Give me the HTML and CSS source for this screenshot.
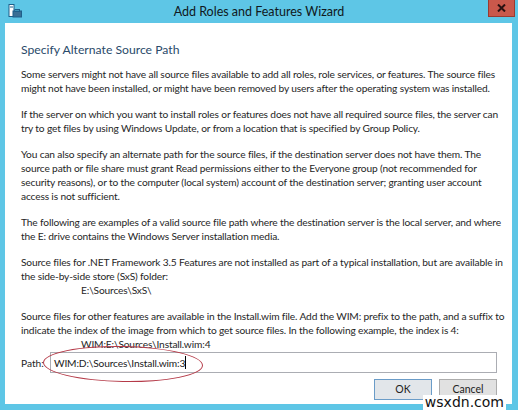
FILE: index.html
```html
<!DOCTYPE html>
<html>
<head>
<meta charset="utf-8">
<link rel="stylesheet" href="styles.css">
</head>
<body>
<div class="window">
  <div class="titlebar">
    <svg class="appicon" width="14" height="14" viewBox="0 0 14 14">
      <rect x="1" y="0.5" width="5" height="12" fill="#fff" stroke="#1d5f8a" stroke-width="1"/>
      <line x1="2" y1="3" x2="5" y2="3" stroke="#1d5f8a"/>
      <rect x="5" y="7" width="8.5" height="6" fill="#3a6f95" stroke="#1d5f8a" stroke-width="1"/>
      <rect x="7" y="5.5" width="4.5" height="2" fill="none" stroke="#1d5f8a" stroke-width="1"/>
    </svg>
    <div class="title">Add Roles and Features Wizard</div>
    <div class="close">
      <svg width="9" height="8" viewBox="0 0 9 8"><path d="M1 0.5 L8 7.5 M8 0.5 L1 7.5" stroke="#2a1010" stroke-width="2"/></svg>
    </div>
  </div>
  <div class="content">
    <h1 class="heading">Specify Alternate Source Path</h1>
    <p>Some servers might not have all source files available to add all roles, role services, or features. The source files<br>might not have been installed, or might have been removed by users after the operating system was installed.</p>
    <p>If the server on which you want to install roles or features does not have all required source files, the server can<br>try to get files by using Windows Update, or from a location that is specified by Group Policy.</p>
    <p>You can also specify an alternate path for the source files, if the destination server does not have them. The<br>source path or file share must grant Read permissions either to the Everyone group (not recommended for<br>security reasons), or to the computer (local system) account of the destination server; granting user account<br>access is not sufficient.</p>
    <p>The following are examples of a valid source file path where the destination server is the local server, and where<br>the E: drive contains the Windows Server installation media.</p>
    <p>Source files for .NET Framework 3.5 Features are not installed as part of a typical installation, but are available in<br>the side-by-side store (SxS) folder:<br><span class="indent">E:\Sources\SxS\</span></p>
    <p class="last">Source files for other features are available in the Install.wim file. Add the WIM: prefix to the path, and a suffix to<br>indicate the index of the image from which to get source files. In the following example, the index is 4:<br><span class="indent">WIM:E:\Sources\Install.wim:4</span></p>
    <div class="pathrow">
      <span class="pathlabel">Path:</span>
      <div class="textbox">WIM:D:\Sources\Install.wim:3<span class="caret"></span></div>
      <div class="ellipse"></div>
    </div>
    <div class="buttons">
      <div class="btn default">OK</div>
      <div class="btn">Cancel</div>
    </div>
  </div>
  <div class="watermark">wsxdn.com</div>
</div>
</body>
</html>
```
FILE: styles.css
```css
html, body {
  margin: 0;
  padding: 0;
}
body {
  width: 518px;
  height: 410px;
  overflow: hidden;
  background: #5ec6e6;
  font-family: Lato, "Noto Sans", sans-serif;
}
.window {
  position: relative;
  width: 518px;
  height: 410px;
  display: flex;
  flex-direction: column;
}
.titlebar {
  height: 23px;
  display: flex;
  align-items: center;
  position: relative;
  flex: none;
}
.appicon {
  margin-left: 8px;
  margin-top: -2px;
}
.title {
  position: absolute;
  left: 0;
  right: 0;
  top: 3px;
  text-align: center;
  font-size: 12.5px;
  line-height: 18px;
  color: #101820;
}
.close {
  position: absolute;
  right: 3px;
  top: 0;
  width: 27px;
  height: 17px;
  background: #c9584b;
  border: 1px solid #9a3a30;
  border-top: none;
  box-sizing: border-box;
  display: flex;
  align-items: center;
  justify-content: center;
}
.content {
  flex: 1;
  margin: 0 6px 6px 5px;
  background: #fff;
  padding: 17px 15px 0 16px;
  box-sizing: border-box;
  color: #262626;
  font-size: 10.2px;
  line-height: 14px;
  position: relative;
}
.heading {
  margin: 0 0 7px 0;
  font-weight: normal;
  font-size: 12.2px;
  line-height: 20px;
  color: #2a4a6a;
}
p {
  margin: 0 0 12px 0;
  white-space: nowrap;
  letter-spacing: -0.15px;
}
p.last {
  margin-bottom: 1px;
}
.indent {
  padding-left: 60px;
}
.pathrow {
  display: flex;
  align-items: center;
  position: relative;
}
.pathlabel {
  width: 29px;
  flex: none;
}
.textbox {
  flex: 1;
  height: 21px;
  border: 1px solid #abadb3;
  box-sizing: border-box;
  padding-left: 3px;
  display: flex;
  align-items: center;
  color: #1a1a1a;
  letter-spacing: -0.15px;
}
.caret {
  display: inline-block;
  width: 1px;
  height: 13px;
  background: #000;
}
.ellipse {
  position: absolute;
  left: 22px;
  top: -6px;
  width: 160px;
  height: 36px;
  border: 1px solid #b53a48;
  border-radius: 50%;
  box-sizing: border-box;
  transform: rotate(1deg);
}
.buttons {
  display: flex;
  justify-content: flex-end;
  gap: 7px;
  margin-top: 6px;
}
.btn {
  width: 58px;
  height: 21px;
  box-sizing: border-box;
  border: 1px solid #acacac;
  background: #e1e1e1;
  text-align: center;
  line-height: 19px;
  font-size: 10.5px;
  color: #222;
}
.btn.default {
  border-color: #6a9cc8;
  background: #e2e6ea;
}
.watermark {
  position: absolute;
  right: 12px;
  bottom: 0;
  font-family: "DejaVu Sans", sans-serif;
  font-size: 14px;
  line-height: 15px;
  color: #111;
  background: #fff;
  padding: 0 2px;
}
```
